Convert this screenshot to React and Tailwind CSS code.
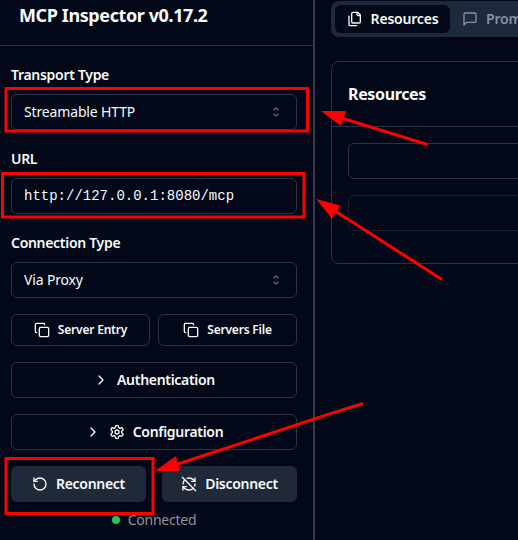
import React from "react";
import { ChevronRight, Copy, RefreshCwOff, RotateCcw } from "lucide-react";

function LineIcon({ className = "", children }) {
  return (
    <svg
      width="16"
      height="16"
      viewBox="0 0 24 24"
      fill="none"
      stroke="currentColor"
      strokeWidth="2"
      strokeLinecap="round"
      strokeLinejoin="round"
      className={`shrink-0 ${className}`}
    >
      {children}
    </svg>
  );
}

function FilesIcon() {
  return (
    <LineIcon className="mr-2">
      <path d="M20 7h-3a2 2 0 0 1-2-2V2" />
      <path d="M9 18a2 2 0 0 1-2-2V4a2 2 0 0 1 2-2h7l4 4v10a2 2 0 0 1-2 2Z" />
      <path d="M3 7.6v12.8A1.6 1.6 0 0 0 4.6 22h9.8" />
    </LineIcon>
  );
}

function MessageIcon() {
  return (
    <LineIcon className="mr-2">
      <path d="M21 15a2 2 0 0 1-2 2H7l-4 4V5a2 2 0 0 1 2-2h14a2 2 0 0 1 2 2z" />
    </LineIcon>
  );
}

function SettingsIcon() {
  return (
    <LineIcon>
      <path d="M12.22 2h-.44a2 2 0 0 0-2 2v.18a2 2 0 0 1-1 1.73l-.43.25a2 2 0 0 1-2 0l-.15-.08a2 2 0 0 0-2.73.73l-.22.38a2 2 0 0 0 .73 2.73l.15.1a2 2 0 0 1 1 1.72v.51a2 2 0 0 1-1 1.74l-.15.09a2 2 0 0 0-.73 2.73l.22.38a2 2 0 0 0 2.73.73l.15-.08a2 2 0 0 1 2 0l.43.25a2 2 0 0 1 1 1.73V20a2 2 0 0 0 2 2h.44a2 2 0 0 0 2-2v-.18a2 2 0 0 1 1-1.73l.43-.25a2 2 0 0 1 2 0l.15.08a2 2 0 0 0 2.73-.73l.22-.39a2 2 0 0 0-.73-2.73l-.15-.08a2 2 0 0 1-1-1.74v-.5a2 2 0 0 1 1-1.74l.15-.09a2 2 0 0 0 .73-2.73l-.22-.38a2 2 0 0 0-2.73-.73l-.15.08a2 2 0 0 1-2 0l-.43-.25a2 2 0 0 1-1-1.73V4a2 2 0 0 0-2-2z" />
      <circle cx="12" cy="12" r="3" />
    </LineIcon>
  );
}

function CaretSort() {
  return (
    <svg width="16" height="16" viewBox="0 0 15 15" fill="currentColor" className="shrink-0 opacity-50">
      <path
        fillRule="evenodd"
        clipRule="evenodd"
        d="M4.93179 5.43179C4.75605 5.60753 4.75605 5.89245 4.93179 6.06819C5.10753 6.24392 5.39245 6.24392 5.56819 6.06819L7.49999 4.13638L9.43179 6.06819C9.60753 6.24392 9.89245 6.24392 10.0682 6.06819C10.2439 5.89245 10.2439 5.60753 10.0682 5.43179L7.81819 3.18179C7.73379 3.0974 7.61933 3.04999 7.49999 3.04999C7.38064 3.04999 7.26618 3.0974 7.18179 3.18179L4.93179 5.43179ZM10.0682 9.56819C10.2439 9.39245 10.2439 9.10753 10.0682 8.93179C9.89245 8.75606 9.60753 8.75606 9.43179 8.93179L7.49999 10.8636L5.56819 8.93179C5.39245 8.75606 5.10753 8.75606 4.93179 8.93179C4.75605 9.10753 4.75605 9.39245 4.93179 9.56819L7.18179 11.8182C7.35753 11.9939 7.64245 11.9939 7.81819 11.8182L10.0682 9.56819Z"
      />
    </svg>
  );
}

function Field({ label, children }) {
  return (
    <div className="flex flex-col gap-2">
      <label className="h-6 text-sm leading-[26px] font-semibold tracking-[-0.3px]">{label}</label>
      {children}
    </div>
  );
}

function Select({ value }) {
  return (
    <button className="flex h-9 items-center justify-between rounded-md border border-[#2b3444] px-3 text-sm">
      <span className="tracking-[-0.15px]">{value}</span>
      <CaretSort />
    </button>
  );
}

function OutlineButton({ className, children }) {
  return (
    <button className={`flex items-center justify-center gap-2 rounded-md border border-[#2b3444] font-semibold ${className}`}>
      {children}
    </button>
  );
}

function SolidButton({ children }) {
  return (
    <button className="flex h-9 items-center justify-center gap-2 rounded-md bg-[#202937] text-sm font-semibold tracking-[-0.3px]">
      {children}
    </button>
  );
}

function Sidebar() {
  return (
    <aside className="flex w-[315px] shrink-0 flex-col border-r-2 border-[#303b4b]">
      <div className="h-[46px] border-b border-[#2b3444] pt-px pl-[19px]">
        <h1 className="text-[18px] leading-7 font-bold tracking-[-0.4px]">MCP Inspector v0.17.2</h1>
      </div>
      <div className="flex flex-col gap-4 pt-4 pr-4 pl-[11px]">
        <Field label="Transport Type">
          <Select value="Streamable HTTP" />
        </Field>
        <Field label="URL">
          <input
            readOnly
            value="http://127.0.0.1:8080/mcp"
            className="h-9 rounded-md border border-[#2b3444] px-3 font-['Liberation_Mono',monospace] text-sm outline-none"
          />
        </Field>
        <Field label="Connection Type">
          <Select value="Via Proxy" />
        </Field>
        <div className="grid grid-cols-2 gap-2">
          <OutlineButton className="h-8 text-xs tracking-[-0.2px]">
            <Copy size={16} />
            Server Entry
          </OutlineButton>
          <OutlineButton className="h-8 text-xs tracking-[-0.2px]">
            <Copy size={16} />
            Servers File
          </OutlineButton>
        </div>
        <OutlineButton className="h-9 text-sm tracking-[-0.3px]">
          <ChevronRight size={16} />
          Authentication
        </OutlineButton>
        <OutlineButton className="h-9 text-sm tracking-[-0.3px]">
          <ChevronRight size={16} />
          <SettingsIcon />
          Configuration
        </OutlineButton>
        <div className="grid grid-cols-2 gap-4">
          <SolidButton>
            <RotateCcw size={16} />
            Reconnect
          </SolidButton>
          <SolidButton>
            <RefreshCwOff size={16} />
            Disconnect
          </SolidButton>
        </div>
      </div>
      <div className="mt-2 flex h-5 items-center justify-center gap-2 pr-[5px]">
        <div className="size-2 rounded-full bg-[#22c55e]" />
        <span className="text-sm tracking-[-0.25px] text-[#8f949b]">Connected</span>
      </div>
    </aside>
  );
}

function Main() {
  return (
    <main className="min-w-0 flex-1 pl-4">
      <div className="mt-px flex h-9 w-[400px] items-center rounded-lg bg-[#1e293b] p-1 text-sm font-semibold tracking-[-0.2px]">
        <div className="flex h-7 w-[115px] items-center justify-center rounded-md bg-[#020817]">
          <FilesIcon />
          Resources
        </div>
        <div className="flex h-7 items-center px-3 text-[#8592a6]">
          <MessageIcon />
          Prompts
        </div>
      </div>
      <section className="mt-6 h-[203px] w-[400px] rounded-lg border border-[#2b3444]">
        <div className="flex h-[65px] items-center border-b border-[#2b3444] px-4">
          <h3 className="text-base font-bold tracking-[-0.35px]">Resources</h3>
        </div>
        <div className="flex flex-col gap-4 p-4">
          <div className="h-9 rounded-md border border-[#2b3444]" />
          <div className="h-9 rounded-md border border-[#2b3444] opacity-50" />
        </div>
      </section>
    </main>
  );
}

function Annotations() {
  return (
    <svg className="pointer-events-none absolute inset-0" width="518" height="540" fill="none" stroke="#ff0000" strokeWidth="3">
      <rect x="6" y="88.500" width="301.5" height="42.5" />
      <rect x="2.500" y="173.500" width="301.5" height="43.5" />
      <rect x="6" y="458.500" width="147" height="55" />
      <path d="M427.500 144.500 343 118.500M442 279.500 336 211.500M363 403.500 328 414.400 178 464" />
      <g fill="#ff0000" stroke="none">
        <path d="M321 111 346 111 341 126Z" />
        <path d="M316 199 340.500 205.500 332 218.500Z" />
        <path d="M155 471 176 456 180 471Z" />
      </g>
    </svg>
  );
}

export default function App() {
  return (
    <div className="relative flex h-[540px] w-[518px] overflow-hidden bg-[#020817] font-['Noto_Sans',sans-serif] text-slate-50">
      <Sidebar />
      <Main />
      <Annotations />
    </div>
  );
}
